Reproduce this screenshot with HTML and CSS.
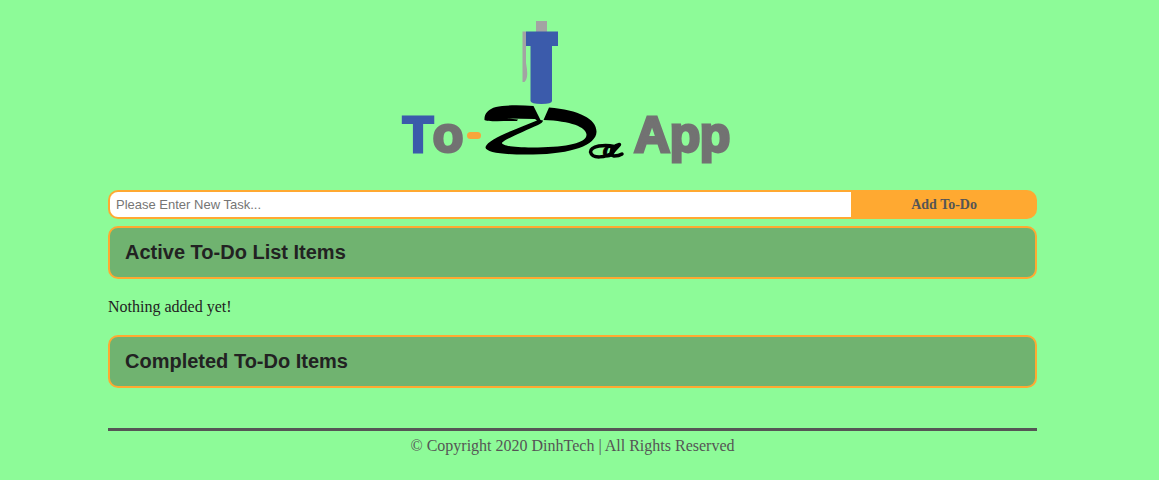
FILE: index.html
```html
<!DOCTYPE html>
<html lang="en">
<head>
<meta charset="utf-8">
<title>To-Do App</title>
<link rel="stylesheet" href="styles.css">
</head>
<body>
<div class="page">
  <header class="header">
    <svg class="logo" viewBox="400 16 336 148" role="img" aria-label="To-Do App">
      <rect x="536" y="21" width="11" height="13" fill="#a3a3a3"/>
      <path d="M522.500 31.500H526V63Q528.500 76 526 80L524.500 82H522.500Z" fill="#a3a3a3"/>
      <path d="M526 31.500H558V46H552V101Q552 104 541.500 104T530.500 101V46H526Z" fill="#3b5bab"/>
      <path d="M533.500 106C520 105 504 105 496 107C488 109 484 114 484.500 120C486 122 506 121 517 121L518 119.500L507 118.500L535 119L537 120.500C514 130 488 139 485.500 147C485 153 508 155 533 154.500C572 154 596 145 596.500 132C597 119 579 110 549 107.500L543.500 120C571 121 586 127 586.500 134.500C587 143 567 147 538 147.500C518 148 502 146 502 143C503 140 525 131 538 125Q543 122.500 543 120.500L540.500 120Z" fill="#000"/>
      <path d="M614 146.500C605 144 590.500 146 590.500 152C592 159 606 158 613 152C617 147 622 143 618 145C612 147 608 155 614 156Q619 156 622 154" fill="none" stroke="#000" stroke-width="3.500" stroke-linecap="round"/>
      <rect x="467" y="132" width="14" height="7" rx="3.500" fill="#f6a63c"/>
      <g class="logo-text">
        <text class="logo-blue" x="418" y="152">T</text>
        <text x="448" y="152">o</text>
        <text class="logo-ink" x="609" y="157">o</text>
        <text x="652" y="152">A</text>
        <text x="685" y="152">p</text>
        <text x="715" y="152">p</text>
      </g>
    </svg>
  </header>
  <main>
    <form class="task-form">
      <input class="task-input" type="text" placeholder="Please Enter New Task..." aria-label="New task">
      <button class="task-button" type="button">Add To-Do</button>
    </form>
    <h2 class="panel">Active To-Do List Items</h2>
    <p class="empty">Nothing added yet!</p>
    <h2 class="panel">Completed To-Do Items</h2>
  </main>
  <footer class="footer">© Copyright 2020 DinhTech | All Rights Reserved</footer>
</div>
</body>
</html>
```
FILE: styles.css
```css
* { box-sizing: border-box; }
body {
  margin: 0;
  padding: 16px 14px 0 0;
  background: #8dfb98;
  color: #222;
  font: 16px/18px "Liberation Serif", serif;
}
.page { margin: 0 108px; }
.header {
  display: flex;
  justify-content: center;
  padding-bottom: 26px;
}
.logo {
  width: 336px;
  max-width: 100%;
  margin-right: 10px;
}
.logo-text {
  font: bold 50px "Liberation Sans", sans-serif;
  text-anchor: middle;
  fill: #727272;
  stroke: #727272;
  stroke-width: 3px;
}
.logo-text .logo-blue {
  fill: #3b5bab;
  stroke: #3b5bab;
}
.logo-text .logo-ink {
  font: italic bold 24px "Liberation Serif", serif;
  fill: #000;
  stroke: #000;
  stroke-width: 1px;
}
.task-form {
  display: flex;
  height: 29px;
  margin-bottom: 7px;
}
.task-input {
  flex: 1;
  min-width: 0;
  padding: 0 6px;
  border: 2px solid #ffa931;
  border-right: 0;
  border-radius: 10px 0 0 10px;
  background: #fff;
  font: 13px "Liberation Sans", sans-serif;
}
.task-input::placeholder { color: #757575; }
.task-button {
  flex: 0 0 20%;
  padding: 0;
  border: 0;
  border-radius: 0 10px 10px 0;
  background: #ffa931;
  color: #555;
  font: bold 14px "Liberation Serif", serif;
}
.panel {
  margin: 0;
  padding: 12px 15px;
  border: 2px solid #ffa931;
  border-radius: 10px;
  background: #70b370;
  font: bold 20px/25px "Liberation Sans", sans-serif;
}
.empty { margin: 19px 0; }
.footer {
  margin-top: 40px;
  padding-top: 6px;
  border-top: 3px solid #555;
  color: #555;
  text-align: center;
}
```
